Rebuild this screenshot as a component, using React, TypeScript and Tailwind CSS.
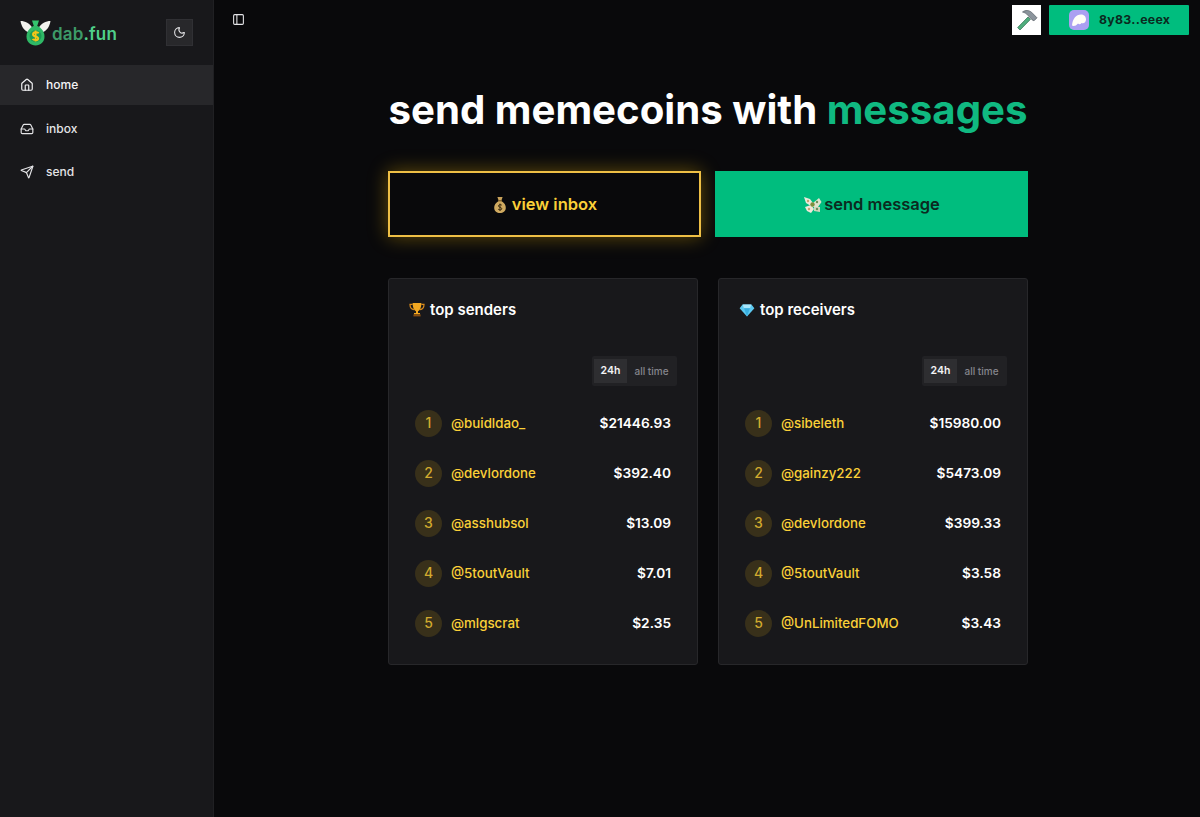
import { Home, Inbox, Send, Moon, PanelLeft } from "lucide-react";

const senders = [
  { name: "@buidldao_", amount: "$21446.93" },
  { name: "@devlordone", amount: "$392.40" },
  { name: "@asshubsol", amount: "$13.09" },
  { name: "@5toutVault", amount: "$7.01" },
  { name: "@mlgscrat", amount: "$2.35" },
];

const receivers = [
  { name: "@sibeleth", amount: "$15980.00" },
  { name: "@gainzy222", amount: "$5473.09" },
  { name: "@devlordone", amount: "$399.33" },
  { name: "@5toutVault", amount: "$3.58" },
  { name: "@UnLimitedFOMO", amount: "$3.43" },
];

function MoneyBag() {
  return (
    <svg width="16" height="18" viewBox="0 0 16 18" className="shrink-0">
      <path d="M5.400 1 L10.600 1 L9.400 4.600 L6.600 4.600 Z" fill="#c9a25a" />
      <path d="M6.600 5 H9.400 C12.200 6.600 14 9.400 13.800 12 C13.600 15.400 11.200 17 8 17 C4.800 17 2.400 15.400 2.200 12 C2 9.400 3.800 6.600 6.600 5 Z" fill="#d0aa60" />
      <rect x="6" y="4.300" width="4" height="1.100" fill="#8a6a2e" />
      <path d="M9.800 9.200 C9.200 8.400 6.500 8.300 6.500 10 C6.500 11.700 9.800 11 9.800 12.800 C9.800 14.200 7 14.100 6.200 13.200 M8 7.600 V15" stroke="#3d2c10" strokeWidth="1" fill="none" />
    </svg>
  );
}

function MoneyWings() {
  return (
    <svg width="19" height="18" viewBox="0 0 19 18" className="shrink-0">
      <path d="M1 1 L7 3 L10 7 L8 10 L3 7 Z" fill="#eceadb" />
      <path d="M10 7 L16 2 L18.500 6 L15 11 L9 11 Z" fill="#dfe3cf" />
      <path d="M2 11 L8 9 L11 13 L8 17 L4 15 Z" fill="#efe8da" />
      <path d="M11 11 L17 11 L17 16 L11 15 Z" fill="#cfd6bd" />
      <circle cx="9.500" cy="8.500" r="2.200" fill="#7f8f3e" />
      <circle cx="5" cy="5" r="1.200" fill="#c8a070" />
      <circle cx="14" cy="6" r="1.200" fill="#6e8f58" />
      <circle cx="6" cy="13" r="1.200" fill="#c8a070" />
      <circle cx="14" cy="13" r="1.200" fill="#6e8f58" />
    </svg>
  );
}

function Trophy() {
  return (
    <svg width="16" height="16" viewBox="0 0 16 16" className="shrink-0">
      <path d="M3.600 2.400 H1 C1 5.400 2.400 7.200 5 7.600 M12.400 2.400 H15 C15 5.400 13.600 7.200 11 7.600" stroke="#d98a1c" strokeWidth="1.200" fill="none" />
      <path d="M3.600 1 H12.400 C12.400 5.600 11 8.400 9 9.200 V11 H7 V9.200 C5 8.400 3.600 5.600 3.600 1 Z" fill="#f3a821" />
      <rect x="5" y="11" width="6" height="1.400" fill="#f3a821" />
      <rect x="4.400" y="12.400" width="7.200" height="2" fill="#8a4f12" />
    </svg>
  );
}

function Gem() {
  return (
    <svg width="16" height="16" viewBox="0 0 16 16" className="shrink-0">
      <path d="M3.600 2.400 H12.400 L15.400 6.200 L8 14.400 L0.600 6.200 Z" fill="#5cc8f0" />
      <path d="M3.600 2.400 H12.400 L11 6.200 H5 Z" fill="#a8e6fb" />
      <path d="M5 6.200 H11 L8 14.400 Z" fill="#38aee0" />
    </svg>
  );
}

function Logo() {
  return (
    <svg width="31" height="26" viewBox="0 0 31 26" className="shrink-0">
      <path d="M0.500 1 C5 1 10 3.500 12.500 8 L9 12.500 C4.500 11 1.500 7 0.500 1 Z" fill="#f2f2ee" />
      <path d="M30.500 1 C26 1 21 3.500 18.500 8 L22 12.500 C26.500 11 29.500 7 30.500 1 Z" fill="#f2f2ee" />
      <path d="M12 0.500 L19 0.500 L17.200 6 L13.800 6 Z" fill="#35c46f" />
      <path d="M13.500 6 H17.500 C21.500 8 24.500 12 24.500 16.500 C24.500 22 20.500 25.500 15.500 25.500 C10.500 25.500 6.500 22 6.500 16.500 C6.500 12 9.500 8 13.500 6 Z" fill="#2fb866" />
      <circle cx="15.500" cy="16" r="6" fill="#1c9a55" />
      <path d="M18.700 13.300 C17.500 11.700 13 11.900 13 14.400 C13 17 18.200 15.800 18.200 18.400 C18.200 20.700 13.700 20.500 12.500 19 M15.600 10.600 V21.400" stroke="#f5c518" strokeWidth="1.900" fill="none" />
    </svg>
  );
}

function Hammer() {
  return (
    <svg width="24" height="24" viewBox="0 0 24 24">
      <path d="M5 22 L2.600 19.600 L13 9 L15.400 11.400 Z" fill="#4fae7d" stroke="#2f6f50" strokeWidth="0.700" />
      <path d="M7.500 4 C10.500 1.800 14 2.200 16.500 4.200 L22 9.800 L19 12.800 L17 11.800 L12.800 7.200 C11.500 5.600 9.800 4.600 7.500 4 Z" fill="#8b949c" stroke="#545c63" strokeWidth="0.700" />
    </svg>
  );
}

function Phantom() {
  return (
    <div className="w-5 h-5 rounded-[5px] bg-[#ab9ff2] flex items-center justify-center">
      <svg width="16" height="14" viewBox="0 0 16 14">
        <path d="M1 12.500 C1.500 6 5 1.500 10 1.500 C13.500 1.500 15 4 15 6.500 C15 9.500 12.500 11 10.500 10 C9.500 11.500 8 11.500 7 10.500 C5 13 2.500 13.500 1 12.500 Z" fill="#fffdf8" />
      </svg>
    </div>
  );
}

function Board({ icon, title, rows }: { icon: React.ReactNode; title: string; rows: { name: string; amount: string }[] }) {
  return (
    <div className="flex-1 h-[387px] bg-[#18181b] border border-[#27272a] rounded-[3px] px-5 pt-5">
      <div className="flex items-center gap-[5px] h-[22px] text-white text-[15px] font-semibold">
        {icon}
        <span>{title}</span>
      </div>
      <div className="flex justify-end mt-[35px]">
        <div className="flex items-center h-[30px] w-[85px] px-[1px] bg-[#212124] rounded-[2px] text-[11px] font-semibold">
          <div className="w-[33px] h-[24px] ml-[1px] flex items-center justify-center bg-[#2e2e31] text-[#f4f4f5] text-[10.500px]">24h</div>
          <div className="flex-1 text-center text-[#85858c] text-[10px] font-medium">all time</div>
        </div>
      </div>
      <div className="mt-3 px-[6px]">
        {rows.map((row, i) => (
          <div key={row.name} className="flex items-center h-[50px]">
            <div className="w-[27px] h-[27px] rounded-full bg-[#38301a] flex items-center justify-center text-[#d1aa2e] text-sm font-medium">
              {i + 1}
            </div>
            <span className="ml-[9px] pt-[1px] text-[#fbd038] text-[13.300px] font-medium">{row.name}</span>
            <span className="ml-auto text-white text-[13.700px] font-semibold">{row.amount}</span>
          </div>
        ))}
      </div>
    </div>
  );
}

export default function App() {
  return (
    <div className="flex h-[817px] overflow-hidden bg-[#09090b] text-white font-['Inter',sans-serif]">
      <aside className="w-[214px] shrink-0 bg-[#18181b] border-r border-[#202023]">
        <div className="h-[65px] flex items-center justify-between pl-5 pr-5">
          <div className="flex items-center">
            <Logo />
            <span className="ml-[1px] mt-[4px] text-[17px] font-semibold text-[#3d9a68] tracking-[0.01em]">
              dab<span className="text-[#4fd08a]">.fun</span>
            </span>
          </div>
          <div className="w-[27px] h-[27px] bg-[#28282b] border border-[#303034] flex items-center justify-center">
            <Moon size={13} className="text-[#e4e4e7]" />
          </div>
        </div>
        <nav className="text-xs font-medium">
          <div className="h-10 flex items-center pl-5 gap-3 bg-[#27272a] text-[#f4f4f5]">
            <Home size={14} />
            <span>home</span>
          </div>
          <div className="h-[43px] mt-[2px] flex items-center pl-5 gap-3 text-[#e4e4e7]">
            <Inbox size={14} />
            <span>inbox</span>
          </div>
          <div className="h-[43px] flex items-center pl-5 gap-3 text-[#e4e4e7]">
            <Send size={14} />
            <span>send</span>
          </div>
        </nav>
      </aside>

      <main className="flex-1 min-w-0">
        <header className="flex items-center h-10 pl-[18px] pr-[11px]">
          <PanelLeft size={13} className="text-[#e4e4e7] -mt-[1px]" />
          <div className="ml-auto flex items-center gap-2">
            <div className="w-[29px] h-[30px] bg-white flex items-center justify-center">
              <Hammer />
            </div>
            <div className="w-[140px] h-[30px] bg-[#00bd7e] rounded-[1px] flex items-center pl-5 gap-[10px] text-[#0b2a20] text-[12.300px] font-bold tracking-wide">
              <Phantom />
              <span>8y83..eeex</span>
            </div>
          </div>
        </header>

        <div className="w-[640px] ml-[174px] pt-[40px]">
          <h1 className="text-[40.200px] leading-[60px] font-bold text-center whitespace-nowrap">
            send memecoins with <span className="text-[#10b981]">messages</span>
          </h1>
          <div className="flex gap-[14px] mt-[31px]">
            <button className="w-[313px] h-[66px] flex items-center justify-center gap-[4px] pt-[1px] bg-[#09090b] border-2 border-[#eebf45] shadow-[0_0_18px_rgba(234,179,8,0.4)] text-[#fbd038] text-[16.500px] font-semibold">
              <MoneyBag />
              view inbox
            </button>
            <button className="w-[313px] h-[66px] flex items-center justify-center gap-[2px] pt-[1px] bg-[#00bd7e] text-[#0b2a20] text-[16.500px] font-semibold">
              <MoneyWings />
              send message
            </button>
          </div>
          <div className="flex gap-5 mt-[41px]">
            <Board icon={<Trophy />} title="top senders" rows={senders} />
            <Board icon={<Gem />} title="top receivers" rows={receivers} />
          </div>
        </div>
      </main>
    </div>
  );
}
